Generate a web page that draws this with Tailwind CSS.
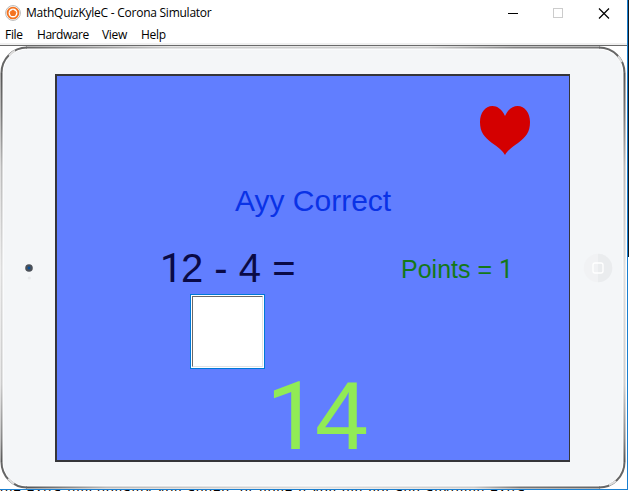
<!DOCTYPE html>
<html lang="en">
<head>
<meta charset="utf-8">
<title>MathQuizKyleC - Corona Simulator</title>
<script src="https://cdn.jsdelivr.net/npm/@tailwindcss/browser@4"></script>
</head>
<body class="relative h-[491px] w-[629px] overflow-hidden bg-white font-['Open_Sans',sans-serif]">
<p class="absolute left-0 top-[482px] whitespace-nowrap font-['Liberation_Sans',sans-serif] text-[13px] leading-[15px] tracking-[1.31px] text-black">the extra functionality you added, or none if you did not add anything extra</p>
<div class="absolute left-[628px] top-0 h-[257px] w-px bg-[#101820]"></div>
<main class="relative flex h-[490px] w-[628px] flex-col border-r border-b border-[#1a7fd0] bg-white">
  <header class="flex h-[26px] shrink-0 items-center">
    <svg class="ml-[5px] size-4" viewBox="0 0 16 16"><circle cx="8" cy="8" r="7.4" fill="#fff" stroke="#b0b0b0" stroke-width=".9"/><circle cx="8" cy="8" r="5.4" fill="#fff" stroke="#f47321" stroke-width="1.9"/><path d="M8 5l2.900 2.100-1.100 3.400H6.200L5.100 7.100z" fill="#f47321" stroke="#f47321" stroke-linejoin="round"/></svg>
    <h1 class="ml-[5px] whitespace-nowrap text-[12px] leading-4 tracking-[-0.25px] text-black">MathQuizKyleC - Corona Simulator</h1>
    <svg class="ml-auto mr-[17px] h-[11px] w-[102px]" viewBox="0 0 102 11" fill="none" shape-rendering="crispEdges"><path d="M0 5.500h10" stroke="#000"/><path d="M45.500 .500h9v9h-9z" stroke="#ccc"/><path d="M91 .500l10 10M101 .500l-10 10" stroke="#000" stroke-width="1.200" shape-rendering="auto"/></svg>
  </header>
  <nav class="flex h-[17px] shrink-0 items-center pl-[5px] text-[12px] leading-4 tracking-[-0.3px] text-black"><span class="w-[32px]">File</span><span class="w-[65px] tracking-[-0.45px]">Hardware</span><span class="w-[39px]">View</span><span>Help</span></nav>
  <div class="h-[3px] shrink-0 border-b border-[#696969] bg-[#f0f0f0]"></div>
  <section class="relative flex h-[443px] w-[627px]">
    <svg class="absolute inset-0" width="627" height="443" viewBox="0 0 627 443" fill="none">
      <defs>
        <linearGradient id="h" gradientUnits="userSpaceOnUse" x1="26" y1="0" x2="600" y2="0"><stop offset="0" stop-color="#555"/><stop offset=".05" stop-color="#777"/><stop offset=".14" stop-color="#bbb"/><stop offset=".5" stop-color="#ddd"/><stop offset=".78" stop-color="#ccc"/><stop offset=".86" stop-color="#777"/><stop offset="1" stop-color="#666"/></linearGradient>
        <linearGradient id="t" gradientUnits="userSpaceOnUse" x1="26" y1="0" x2="600" y2="0"><stop offset="0" stop-color="#666"/><stop offset=".08" stop-color="#888"/><stop offset=".25" stop-color="#ccc"/><stop offset=".7" stop-color="#ccc"/><stop offset=".85" stop-color="#888"/><stop offset="1" stop-color="#777"/></linearGradient>
        <linearGradient id="v" gradientUnits="userSpaceOnUse" x1="0" y1="27" x2="0" y2="416"><stop offset="0" stop-color="#555"/><stop offset=".1" stop-color="#777"/><stop offset=".24" stop-color="#bbb"/><stop offset=".5" stop-color="#ddd"/><stop offset=".8" stop-color="#ccc"/><stop offset=".94" stop-color="#888"/><stop offset="1" stop-color="#555"/></linearGradient>
      </defs>
      <rect x="1.500" y="1.500" width="623" height="440" rx="25" fill="#f4f6f8"/>
      <rect x="3" y="3" width="620" height="437" rx="24" stroke="#fff"/>
      <path d="M1.500 416V27M624.500 27V416" stroke="url(#v)" stroke-width="2"/>
      <path d="M26 1.500H600" stroke="url(#t)" stroke-width="2"/>
      <path d="M26 441.500H600" stroke="url(#h)" stroke-width="2"/>
      <path d="M1.500 27A25.500 25.500 0 0 1 27 1.500M599 1.500A25.500 25.500 0 0 1 624.500 27M624.500 416A25.500 25.500 0 0 1 599 441.500M27 441.500A25.500 25.500 0 0 1 1.500 416" stroke="#666" stroke-width="2"/>
      <path d="M9 9.500q3-3 6-4.900M618 10.200q2 2.500 3.600 6M616 435q-3 2.300-7 4M8.200 432.700q3 3.300 6 5" stroke="#ddd" stroke-width="2.200"/>
    </svg>
    <div class="relative flex w-[55px] items-center justify-center">
      <svg class="ml-[3px] mt-[1px] h-[24px] w-[12px]" viewBox="0 0 12 24"><circle cx="6" cy="12" r="3.800" fill="#4b5058"/><circle cx="6" cy="12" r="1.400" fill="#064f9b"/><circle cx="6.300" cy="22" r="1.600" fill="#e8eaec"/></svg>
    </div>
    <div class="relative mt-[28px] h-[388px] w-[515px] overflow-hidden border-2 border-r border-[#353539] bg-[#617eff] font-['Liberation_Sans',sans-serif] whitespace-nowrap">
      <svg class="absolute left-[423px] top-[30px] h-[50px] w-[50px]" viewBox="0 0 50 50"><path d="M25 10C22 3 17 0 12.500 0 5 0 0 7 0 16c0 10 4 15 12 21 6 4 11 8 13 12 2-4 7-8 13-12 8-6 12-11 12-21C50 7 45 0 37.500 0 33 0 28 3 25 10z" fill="#d40000"/></svg>
      <p class="absolute left-[178px] top-[108px] text-[30px] leading-[34px] text-[#0a32e6]">Ayy Correct</p>
      <p class="absolute left-[103px] top-[169px] text-[40px] leading-[46px] text-[#0a0a46]"><span class="inline-block w-[21px] font-['Roboto',sans-serif] leading-none">1</span>2 - 4 =</p>
      <p class="absolute left-[344px] top-[179px] text-[25px] leading-[28px] text-[#147819]">Points = <span class="font-['Roboto',sans-serif] leading-none">1</span></p>
      <div class="absolute left-[133px] top-[218px] size-[75px] border border-[#0078d7] bg-white p-px"><div class="size-full border border-t-[#696969] border-l-[#696969] border-r-[#e3e3e3] border-b-[#e3e3e3]"></div></div>
      <p class="absolute left-[209px] top-[293px] text-[97px] leading-[90px] text-[#91eb55]"><span class="inline-block w-[49px] font-['Roboto',sans-serif] text-[95px] leading-none">1</span>4</p>
    </div>
    <div class="relative flex flex-1 items-center">
      <svg class="ml-[13px] size-[30px]" viewBox="0 0 30 30"><circle cx="15" cy="15" r="14.300" fill="#f1f2f4"/><path d="M15 .700a14.300 14.300 0 0 1 0 28.600z" fill="#eaecee"/><rect x="10" y="10" width="10" height="10" rx="2" fill="none" stroke="#fff" stroke-width="1.300"/></svg>
    </div>
  </section>
</main>
</body>
</html>
